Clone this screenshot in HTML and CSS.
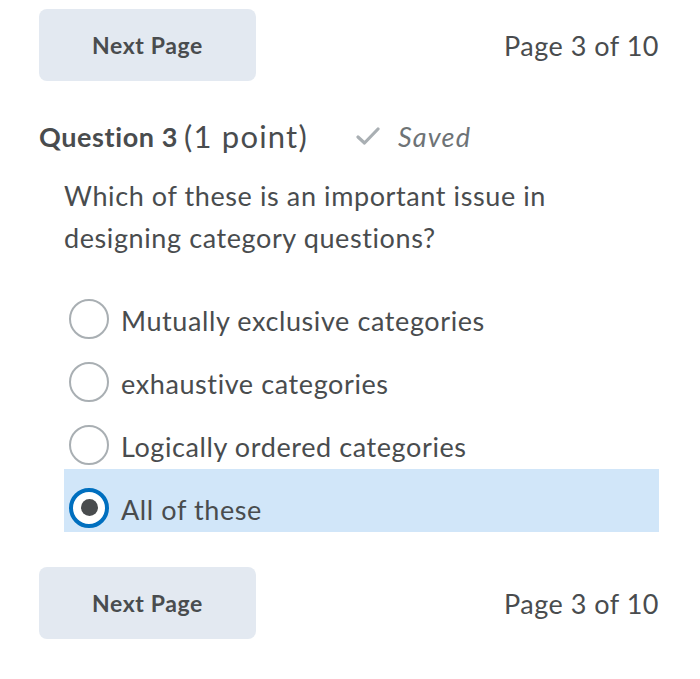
FILE: index.html
```html
<!DOCTYPE html>
<html lang="en">
<head>
    <meta charset="UTF-8">
    <meta name="viewport" content="width=device-width, initial-scale=1.0">
    <title>Quiz - Question 3</title>
<link rel="stylesheet" href="styles.css">
</head>
<body>
<div class="page">
    <div class="pager">
        <button type="button" class="btn-next">Next Page</button>
        <div class="page-count">Page 3 of 10</div>
    </div>

    <h2 class="q-title">
        <span class="q-num">Question 3</span>
        <span class="q-points">(1 point)</span>
        <span class="saved">
            <svg class="check" width="24" height="20" viewBox="0 0 24 20">
                <path d="M2 11 L8.5 17 L22 3" fill="none" stroke="#a9afb3" stroke-width="3.2" stroke-linecap="round" stroke-linejoin="round"/>
            </svg>
            Saved
        </span>
    </h2>

    <p class="q-text">Which of these is an important issue in designing category questions?</p>

    <!-- answer choices -->
    <div class="choices">
        <label class="choice">
            <span class="radio"></span>
            <span class="choice-text">Mutually exclusive categories</span>
        </label>
        <label class="choice">
            <span class="radio"></span>
            <span class="choice-text">exhaustive categories</span>
        </label>
        <label class="choice">
            <span class="radio"></span>
            <span class="choice-text">Logically ordered categories</span>
        </label>
        <label class="choice selected">
            <span class="radio"></span>
            <span class="choice-text">All of these</span>
        </label>
    </div>

    <div class="pager bottom">
        <button type="button" class="btn-next">Next Page</button>
        <div class="page-count">Page 3 of 10</div>
    </div>
</div>
</body>
</html>
```

FILE: styles.css
```css
:root {
  --clr-text: #494c4e;
  --clr-muted: #6e7376;
  --clr-btn: #e3e9f1;
  --clr-select: #d1e6f9;
  --clr-blue: #006fbf;
}

body {
  margin: 0;
  font-family: Lato, "Noto Sans", sans-serif;
  color: var(--clr-text);
  background: #fff;
}

.page {
  width: 700px;
  padding-top: 9px;
}

/*Pager bars*/
.pager {
  display: flex;
  justify-content: space-between;
  align-items: center;
  padding: 0 41px 0 39px;
  height: 72px;
}
.pager.bottom {
  margin-top: 35px;
}

.btn-next {
  width: 217px;
  height: 72px;
  background: var(--clr-btn);
  border: none;
  border-radius: 8px;
  font-family: inherit;
  font-size: 23px;
  font-weight: 700;
  letter-spacing: 0.6px;
  color: var(--clr-text);
  cursor: pointer;
}

.page-count {
  font-size: 27px;
  letter-spacing: 0.5px;
}

/*Question*/
.q-title {
  display: flex;
  align-items: center;
  margin: 35px 0 0 39px;
  height: 40px;
  font-weight: 400;
}
.q-num {
  font-size: 27px;
  font-weight: 700;
  letter-spacing: 0.6px;
}
.q-points {
  font-size: 31px;
  letter-spacing: 1.2px;
  margin-left: 6px;
}
.saved {
  display: flex;
  align-items: center;
  margin-left: 48px;
  font-size: 27px;
  font-style: italic;
  letter-spacing: 1.2px;
  color: var(--clr-muted);
}
.check {
  margin-right: 18px;
}

.q-text {
  margin: 19px 0 0 64px;
  width: 560px;
  font-size: 27px;
  letter-spacing: 0.6px;
  line-height: 42px;
}

/*Choices*/
.choices {
  margin: 21px 41px 0 64px;
}
.choice {
  box-sizing: border-box;
  display: flex;
  align-items: center;
  height: 63px;
  padding: 14px 0 0 5px;
  font-size: 27px;
  letter-spacing: 0.6px;
}
.choice .radio {
  box-sizing: border-box;
  width: 40px;
  height: 40px;
  border: 2px solid #a9afb3;
  border-radius: 50%;
  background: #fff;
  margin-right: 12px;
  display: flex;
  align-items: center;
  justify-content: center;
}
.choice.selected {
  background: var(--clr-select);
}
.choice.selected .radio {
  border: 4px solid var(--clr-blue);
}
.choice.selected .radio::after {
  content: "";
  width: 17px;
  height: 17px;
  border-radius: 50%;
  background: var(--clr-text);
}
.choice-text {
  padding-top: 3px;
}
```
